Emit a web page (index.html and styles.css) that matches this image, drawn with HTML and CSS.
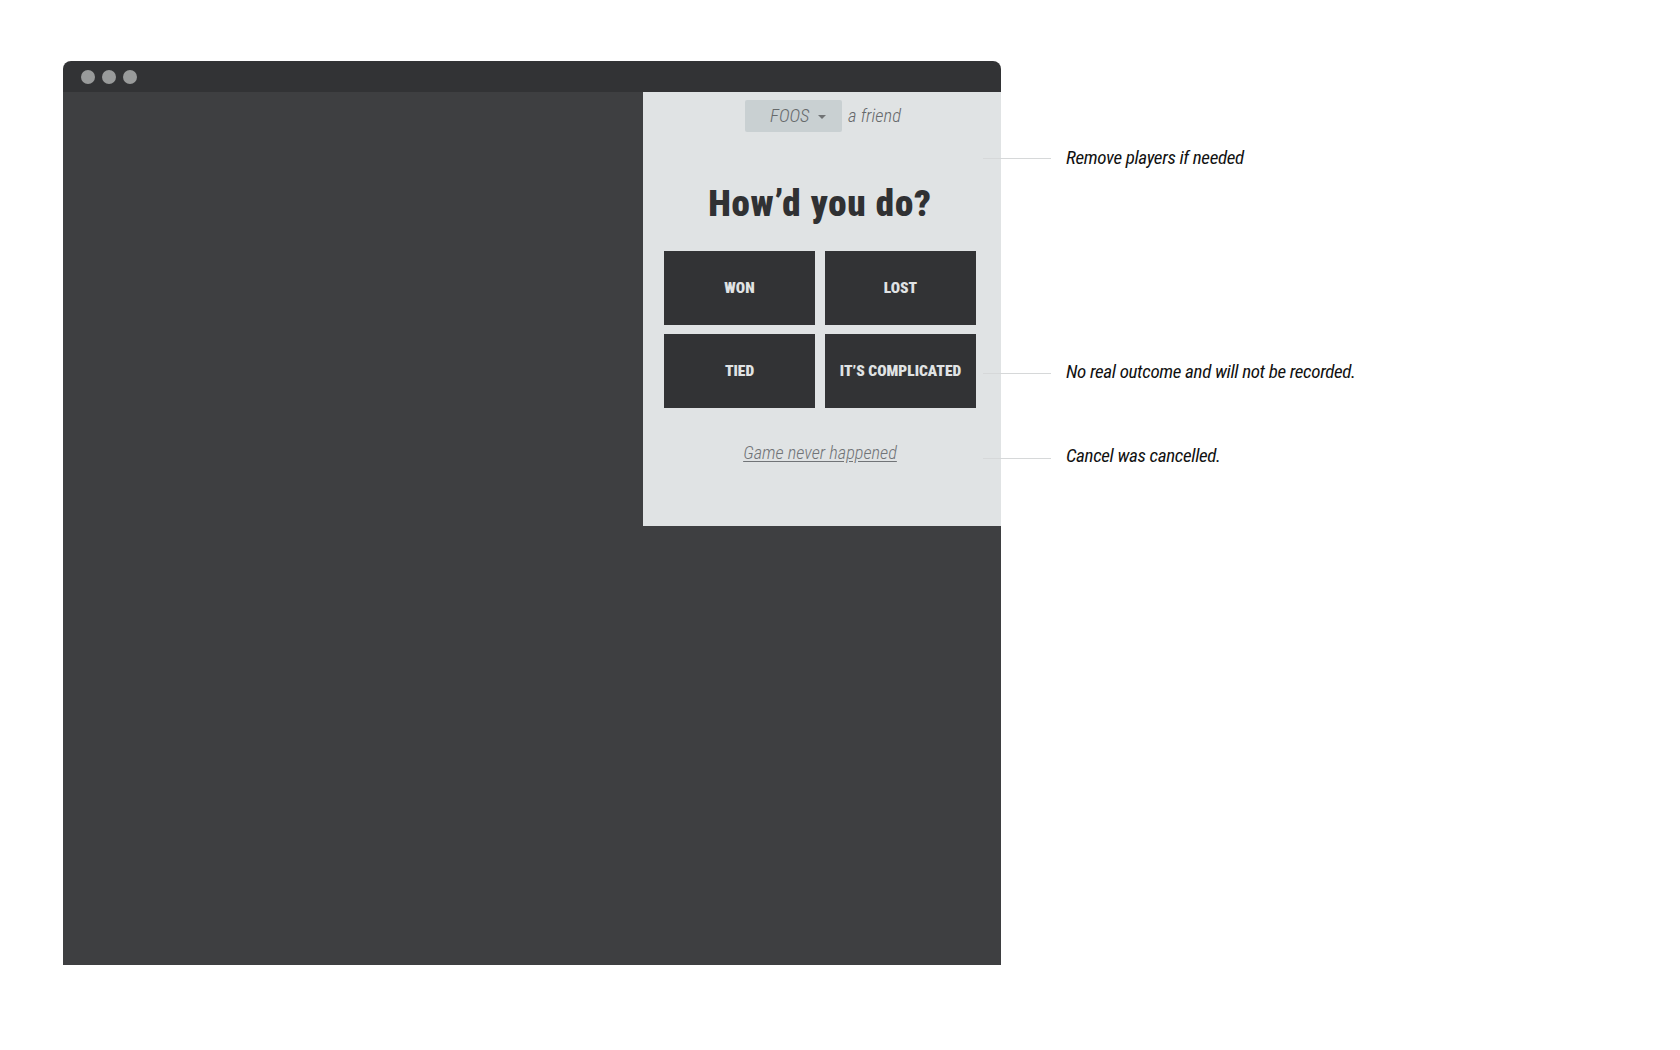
FILE: index.html
```html
<!DOCTYPE html>
<html lang="en">
<head>
<meta charset="utf-8">
<title>How'd you do?</title>
<link rel="stylesheet" href="styles.css">
</head>
<body>
<div class="stage">
  <div class="window">
    <div class="titlebar">
      <span class="dot"></span><span class="dot"></span><span class="dot"></span>
    </div>
    <div class="viewport">
      <div class="panel">
        <div class="game-row">
          <div class="select">
            <span class="select-label">FOOS</span>
            <svg class="caret" width="8" height="4" viewBox="0 0 8 4"><path d="M0 0 L8 0 L4 4 Z" fill="#707375"/></svg>
          </div>
          <span class="friend">a friend</span>
        </div>
        <h1 class="title">How’d you do?</h1>
        <div class="outcomes">
          <button class="outcome">WON</button>
          <button class="outcome">LOST</button>
          <button class="outcome">TIED</button>
          <button class="outcome">IT’S COMPLICATED</button>
        </div>
        <div class="cancel-row"><a class="cancel" href="#">Game never happened</a></div>
      </div>
    </div>
  </div>
  <div class="notes">
    <div class="note note-1"><span class="rule"></span><span class="note-text">Remove players if needed</span></div>
    <div class="note note-2"><span class="rule"></span><span class="note-text">No real outcome and will not be recorded.</span></div>
    <div class="note note-3"><span class="rule"></span><span class="note-text">Cancel was cancelled.</span></div>
  </div>
</div>
</body>
</html>
```
FILE: styles.css
```css
html, body {
  margin: 0;
  padding: 0;
  background: #ffffff;
}
body {
  font-family: "Roboto Condensed", "Roboto", "Liberation Sans", sans-serif;
}
.stage {
  position: relative;
  width: 1680px;
  height: 1050px;
  padding: 61px 0 0 63px;
  box-sizing: border-box;
}
.window {
  width: 938px;
  height: 904px;
  display: flex;
  flex-direction: column;
  border-radius: 8px 8px 0 0;
  overflow: hidden;
}
.titlebar {
  height: 31px;
  background: #323335;
  display: flex;
  align-items: center;
  gap: 7px;
  padding-left: 18px;
  padding-top: 1px;
  box-sizing: border-box;
}
.dot {
  width: 14px;
  height: 14px;
  border-radius: 50%;
  background: #999b9b;
}
.viewport {
  flex: 1;
  background: #3e3f41;
  display: flex;
  justify-content: flex-end;
  align-items: flex-start;
}
.panel {
  width: 358px;
  height: 434px;
  background: #e0e3e4;
  box-sizing: border-box;
  padding: 8px 25px 0 21px;
  display: flex;
  flex-direction: column;
  align-items: center;
}
.game-row {
  display: flex;
  align-items: center;
  gap: 6px;
  height: 32px;
  margin-left: 6px;
}
.select {
  width: 97px;
  height: 32px;
  background: #c9d0d2;
  border-radius: 2px;
  box-sizing: border-box;
  padding: 0 0 0 25px;
  display: flex;
  align-items: center;
  gap: 9px;
}
.select-label,
.friend {
  font-style: italic;
  font-weight: 300;
  font-size: 18.5px;
  line-height: 20px;
  color: #66696b;
}
.caret {
  display: block;
  margin-top: 1px;
}
.title {
  margin: 54px 0 0 0;
  height: 36px;
  font-size: 37px;
  line-height: 36px;
  font-weight: 900;
  letter-spacing: 0.8px;
  color: #303133;
  white-space: nowrap;
}
.outcomes {
  margin-top: 29px;
  width: 312px;
  display: grid;
  grid-template-columns: 151px 151px;
  grid-auto-rows: 74px;
  column-gap: 10px;
  row-gap: 9px;
}
.outcome {
  border: 0;
  margin: 0;
  padding: 0;
  background: #323335;
  color: #e0e3e4;
  font-family: inherit;
  font-weight: 900;
  font-size: 15.5px;
  white-space: nowrap;
}
.cancel-row {
  margin-top: 35px;
  line-height: 20px;
}
.cancel {
  font-style: italic;
  font-weight: 300;
  font-size: 18.3px;
  color: #717477;
  text-decoration: underline;
  text-underline-offset: 2px;
}
.notes {
  position: absolute;
  left: 983px;
  top: 147px;
  display: flex;
  flex-direction: column;
}
.note {
  display: flex;
  align-items: flex-start;
  height: 22px;
  gap: 15px;
}
.note-2 { margin-top: 192px; }
.note-3 { margin-top: 62px; }
.rule {
  width: 68px;
  height: 1px;
  margin-top: 13px;
  background: #d6d8d9;
}
.note-1 .rule { margin-top: 11px; }
.note-2 .rule { margin-top: 12px; }
.note-text {
  font-style: italic;
  font-weight: 400;
  font-size: 19px;
  line-height: 22px;
  letter-spacing: -0.35px;
  color: #111111;
  white-space: nowrap;
}
```
